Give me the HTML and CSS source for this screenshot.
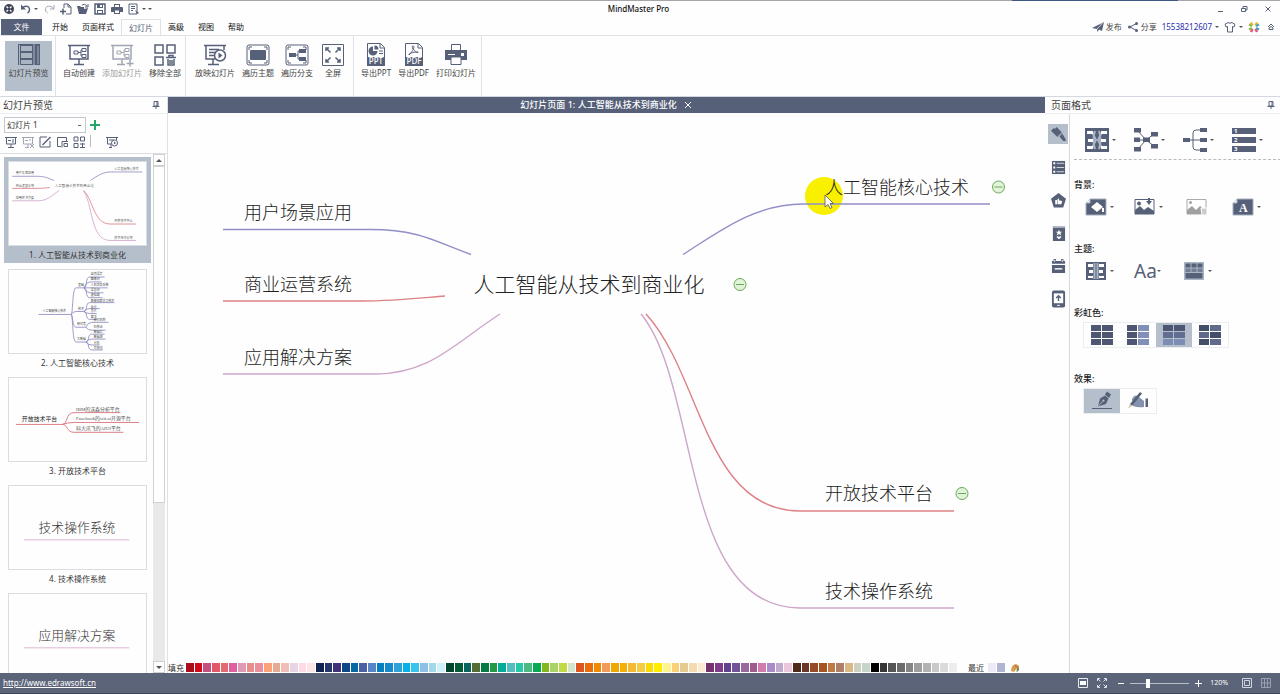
FILE: index.html
```
<!DOCTYPE html>
<html lang="zh-CN">
<head>
<meta charset="utf-8">
<title>MindMaster Pro</title>
<link rel="stylesheet" href="styles.css">
</head>
<body>
<div class="app">
<header class="titlebar">
  <div class="quick">
    <svg class="ic" viewBox="0 0 14 14"><circle cx="7" cy="7" r="5" fill="#3d4456"/><path d="M4.5 4.5l5 5M9.5 4.5l-5 5" stroke="#fff" stroke-width="1.4"/><circle cx="7" cy="7" r="1.6" fill="#3d4456"/></svg>
    <button class="qb" aria-label="撤销"><svg class="ic" viewBox="0 0 14 14"><path d="M3 7C5 3 11 3.500 10.500 8c0 1.500-1 2.500-2 3" class="s2"/><path d="M2 2.500v5h5z" class="f"/></svg></button>
    <i class="caret"></i>
    <button class="qb faded" aria-label="重做"><svg class="ic" viewBox="0 0 14 14"><path d="M12 3v4H8M11.500 6.500C9 3 3 3.500 3.500 8c0 1.500 1 2.500 2 3" class="s1"/></svg></button>
    <button class="qb" aria-label="新建"><svg class="ic" viewBox="0 0 14 14"><path d="M5 6V2h4l3 3v7H7M9 2v3h3" class="s1"/><path d="M1 9.500h6M4 6.500v6" class="s2"/></svg></button>
    <button class="qb" aria-label="打开"><svg class="ic" viewBox="0 0 14 14"><path d="M1 4h3l1 1h3v2l4-1-2 6H3z" class="f"/><path d="M6 3q3-2 5 1M12 2v3H9" class="s1"/></svg></button>
    <button class="qb" aria-label="保存"><svg class="ic" viewBox="0 0 14 14"><path d="M2 2h10v10H2z" class="s2"/><path d="M4 2h6v4H4zM4 8h6v4H4z" class="f"/><path d="M5 9h4v2H5zM7 3h2v2H7z" fill="#fff"/></svg></button>
    <button class="qb" aria-label="打印"><svg class="ic" viewBox="0 0 14 14"><path d="M4 2h6v3h2q1 0 1 1v4h-3v2H4v-2H1V6q0-1 1-1h2z" class="f"/><path d="M5 3h4v2H5zM5 8.500h4v2.500H5z" fill="#fff"/></svg></button>
    <button class="qb" aria-label="预览"><svg class="ic" viewBox="0 0 14 14"><path d="M2 2h8v10H2zM4 4.500h4M4 6.500h4M4 8.500h2" class="s1"/><path d="M8 8l4 3-2 1z" class="f"/></svg></button>
    <i class="caret"></i><i class="caret lined"></i>
  </div>
  <h1 class="apptitle">MindMaster Pro</h1>
  <div class="winctl">
    <button class="qb" aria-label="最小化"><svg class="ic" viewBox="0 0 14 14"><path d="M5 9.500h5" class="s1"/></svg></button>
    <button class="qb" aria-label="还原"><svg class="ic" viewBox="0 0 14 14"><path d="M4.500 6.500h4v3h-4zM6 6V4.500h4V8H9" class="s1"/></svg></button>
    <button class="qb" aria-label="关闭"><svg class="ic" viewBox="0 0 14 14"><path d="M4.500 4.500l5 5M9.500 4.500l-5 5" class="s1"/></svg></button>
  </div>
</header>
<nav class="tabs">
  <button class="tab file">文件</button>
  <button class="tab">开始</button>
  <button class="tab">页面样式</button>
  <button class="tab active">幻灯片</button>
  <button class="tab">高级</button>
  <button class="tab">视图</button>
  <button class="tab">帮助</button>
  <div class="user">
    <button class="ub"><svg class="ic12" viewBox="0 0 12 12"><path d="M0 7L12 1 10 10 7 8.500 5.500 11 5 8z" class="f"/><path d="M5 8l6-6.500" stroke="#fff" stroke-width=".7"/></svg>发布</button>
    <button class="ub"><svg class="ic12" viewBox="0 0 12 12"><path d="M9.500 2.500L3 6l6.500 3.500" class="s1"/><circle cx="9.500" cy="2.500" r="1.500" class="f"/><circle cx="2.500" cy="6" r="1.500" class="f"/><circle cx="9.500" cy="9.500" r="1.500" class="f"/></svg>分享</button>
    <a class="phone" href="#account">15538212607</a><i class="caret"></i>
    <svg class="ic12 shirt" viewBox="0 0 12 12"><path d="M4 1.500q2 1.500 4 0l3 2-1 2.500-1.500-.5V11h-5V5.500L2 6 1 3.500z" class="s1"/></svg><i class="caret"></i>
    <svg class="ic12 flower" viewBox="0 0 12 12"><g stroke-width="2.400"><path d="M4.500 4.500L3 1.500M7.500 4.500L9 1.500" stroke="#f3b02c"/><path d="M8 5l3-1.500M8 7l3 1.500" stroke="#43a6c9"/><path d="M7.500 8L9 11M4.500 8L3 11" stroke="#e0527c"/><path d="M4 5L1 3.500M4 7L1 8.500" stroke="#8dbb47"/></g></svg>
    <svg class="ic12" viewBox="0 0 12 12"><path d="M3 6l3-3 3 3M4 8.500V7l2-1.500L8 7v1.500z" class="s1"/></svg>
  </div>
</nav>
<section class="ribbon">
  <div class="rgroup first">
    <button class="rb on"><svg class="big" viewBox="0 0 24 24"><path d="M1 1h22v21H1z" fill="#566078"/><path d="M4 3h11v5H4zM4 10h11v5H4zM4 17h11v4H4z" fill="#aab4c2"/><path d="M2.500 2v20M17 1v21" stroke="#aab4c2"/><path d="M21 3v18" stroke="#7c879b" stroke-width="2"/></svg>幻灯片预览</button>
  </div>
  <div class="rgroup">
    <button class="rb"><svg class="big" viewBox="0 0 24 24"><path d="M1 2.500h22M3 3v13h18V3M12 16v5M7 21.500h10" class="s2"/><path d="M7 8h4v3H7zM11 9.500h3M14 7v6M14 7h1M14 13h1M15 5.500h4v3h-4zM15 11.500h4v3h-4z" class="s1"/></svg>自动创建</button>
    <button class="rb dis"><svg class="big" viewBox="0 0 24 24"><path d="M1 2.500h22M3 3v13h18V3M12 16v5M7 21.500h8" class="s2"/><path d="M7 8h4v3H7zM11 9.500h3M14 7v6M14 7h1M14 13h1M15 5.500h4v3h-4zM15 11.500h4v3h-4z" class="s1"/><path d="M20 17v6.500M16.500 20.500h7" class="s2"/></svg>添加幻灯片</button>
    <button class="rb"><svg class="big" viewBox="0 0 24 24"><path d="M2 2h8v8H2zM14 2h8v8h-8zM2 14h8v8H2zM13 14.500h10M16 14v-1.500h4V14M15 16v6h6v-6M17 17v4M19 17v4" class="s2"/></svg>移除全部</button>
  </div>
  <div class="rgroup wide">
    <button class="rb"><svg class="big" viewBox="0 0 24 24"><path d="M1 2.500h22M3 3v13h9M21 3v4M10 16v5M5 21.500h11M6 6.500h10M6 9.500h6M6 12.500h5" class="s2"/><circle cx="17" cy="12.500" r="5.500" fill="#fff" stroke="#566078" stroke-width="1.500"/><path d="M15.500 9.500v6l4-3z" class="f"/></svg>放映幻灯片</button>
    <button class="rb"><svg class="big" viewBox="0 0 24 24"><rect x="1" y="2" width="22" height="20" rx="2" class="s1"/><path d="M3 7V4h3M18 4h3v3M3 17v3h3M18 20h3v-3" class="s1"/><rect x="4" y="7" width="16" height="10" rx="1" class="f"/></svg>遍历主题</button>
    <button class="rb"><svg class="big" viewBox="0 0 24 24"><rect x="1" y="2" width="22" height="20" rx="2" class="s1"/><path d="M3 7V4h3M18 4h3v3M3 17v3h3M18 20h3v-3M10 12h3M13 8v8M13 8h2M13 16h2" class="s1"/><path d="M4 10h7v4H4zM14 6h7v4h-7zM14 14h7v4h-7z" class="f"/></svg>遍历分支</button>
    <button class="rb"><svg class="big" viewBox="0 0 24 24"><path d="M1.500 1.500h21v21h-21z" class="s1"/><path d="M9.500 9.500L5 5M14.500 9.500L19 5M9.500 14.500L5 19M14.500 14.500L19 19M5 8V5h3M16 5h3v3M5 16v3h3M16 19h3v-3" class="s2"/></svg>全屏</button>
  </div>
  <div class="rgroup out">
    <button class="rb"><svg class="big" viewBox="0 0 24 24"><path d="M3.500 14V.5h13l4 4V14M16 1v4h4" class="s1"/><path d="M3 14h18v9H3z" class="f"/><path d="M9 3.500A4.500 4.500 0 1 0 13.500 8H9z" class="f"/><path d="M10.500 2.500A4 4 0 0 1 14.500 6.500h-4z" class="f"/><path d="M15 8h4M15 10.500h4" class="s1"/><text x="12" y="21" class="doc">PPT</text></svg>导出PPT</button>
    <button class="rb"><svg class="big" viewBox="0 0 24 24"><path d="M3.500 14V.5h13l4 4V14M16 1v4h4" class="s1"/><path d="M3 14h18v9H3z" class="f"/><path d="M11 3c2 0 1 4-4 9-1-1 3-3 9-3 1 1-2 1-5-3-1-2-1-3 0-3z" class="s1"/><text x="12" y="21" class="doc">PDF</text></svg>导出PDF</button>
    <button class="rb"><svg class="big" viewBox="0 0 24 24"><path d="M7.500 8V1.500h9V8" class="s1"/><path d="M1 7h22v10H1z" class="f"/><path d="M7 14h10v7.500H7z" fill="#fff" stroke="#566078"/><path d="M4 11.500h7" stroke="#fff"/><path d="M17 10h3v3h-3z" fill="#fff"/></svg>打印幻灯片</button>
  </div>
</section>
<main class="work">
  <aside class="slides">
    <h2 class="ptitle">幻灯片预览<svg class="pin" viewBox="0 0 10 10"><path d="M3 1.500h4V6H3zM1.500 6.500h7M5 6.500V9M6 2v4" class="s1"/></svg></h2>
    <div class="pick">
      <select class="sel" aria-label="幻灯片选择"><option>幻灯片 1</option></select>
      <button class="plus" aria-label="新增"><svg viewBox="0 0 12 12" class="ic12"><path d="M6 1v10M1 6h10" stroke="#27a567" stroke-width="2"/></svg></button>
    </div>
    <div class="tools">
      <button class="tb" aria-label="自动创建"><svg class="ic" viewBox="0 0 14 14"><path d="M1 2.500h12M2.500 3v6h9V3M7 9v3M4 12.500h6M4 5.500h3M8 5h2M8 7h2" class="s1"/></svg></button>
      <button class="tb faded" aria-label="删除"><svg class="ic" viewBox="0 0 14 14"><path d="M1 2.500h12M2.500 3v6h9V3M7 9v3M4 12.500h4M4 5.500h3M8 5h2M9 9l4 4M13 9l-4 4" class="s1"/></svg></button>
      <button class="tb" aria-label="编辑"><svg class="ic" viewBox="0 0 14 14"><path d="M9 2H2v10h10V6" class="s1"/><path d="M12.500 2L6 8.500 4.500 10" class="s2"/></svg></button>
      <button class="tb" aria-label="添加主题"><svg class="ic" viewBox="0 0 14 14"><path d="M6 11.500H2.500v-9h9V6M7 12.500v-6h6M9 8.500h3.500v3H9z" class="s1"/></svg></button>
      <button class="tb" aria-label="网格"><svg class="ic" viewBox="0 0 14 14"><path d="M2 2h4v4H2zM8.500 2h4v4h-4zM2 8.500h4v4H2zM8 9h5M8 12.500h5M10.500 8v5" class="s1"/></svg></button>
      <i class="tsep"></i>
      <button class="tb" aria-label="放映"><svg class="ic" viewBox="0 0 14 14"><path d="M1 2.500h12M2.500 3v6H6M11.500 3v2M6 9v4M4 12.500h3M4 5h5" class="s1"/><circle cx="9.500" cy="8" r="3" fill="#fff" stroke="#566078"/><path d="M9 6.500v3l2-1.500z" class="f"/></svg></button>
    </div>
    <div class="listwrap">
      <ol class="list">
        <li class="item cur"><svg class="thumb map" viewBox="204 146 808 488"><use href="#mindmap"/></svg><span>1. 人工智能从技术到商业化</span></li>
        <li class="item"><svg class="thumb tree" viewBox="0 0 139 84">
          <g fill="none" stroke="#8583bd" stroke-width=".8"><path d="M30 45H63C65 45 64 18 68 18H76C80 18 77 7 82 7H97M76 18Q78 12 82 12H94M76 18H100M76 18Q78 23 82 23H96M76 18C80 18 77 28 82 28H95M63 45Q65 42 68 42H76C80 42 77 33 82 33H107M76 42Q78 39 82 39H92M76 42Q78 44 82 44H89M76 42C80 42 77 50 82 50H89M63 45C65 45 64 58 68 58H78Q80 53 84 53H101M78 58Q80 61 84 61H98M63 45C65 45 64 73 68 73H78C82 73 79 65 84 65H97M78 73Q80 70 84 70H98M78 73Q80 76 84 76H92M78 73C82 73 79 81 84 81H95"/></g>
          <g class="micro"><text x="34" y="43">人工智能核心技术</text><text x="70" y="16">基础</text><text x="70" y="40">技术</text><text x="69" y="56">研究者</text><text x="69" y="71">大数据</text><text x="83" y="5">自然语言</text><text x="83" y="10">图像识</text><text x="83" y="16">人机交互系统</text><text x="83" y="21">语音识</text><text x="83" y="26">虚拟现</text><text x="83" y="32">智能机器学习技术</text><text x="83" y="38">云计</text><text x="83" y="43">芯片</text><text x="83" y="49">算法</text><text x="86" y="52">研究机构</text><text x="86" y="59">科技企</text><text x="86" y="64">数据汇</text><text x="86" y="69">数据挖</text><text x="86" y="75">分析</text><text x="86" y="80">可视化</text></g></svg><span>2. 人工智能核心技术</span></li>
        <li class="item"><svg class="thumb" viewBox="0 0 139 84"><path d="M7 47H54C60 47 57 35 66 35H113M54 47Q60 45 66 45H132M54 47C60 47 58 55 66 55H116" fill="none" stroke="#dd7f86"/><text x="13" y="44" font-size="6" fill="#222">开放技术平台</text><g class="mono"><text x="68" y="33">IBM的沃森分析平台</text><text x="68" y="43">Facebook的wit.ai开源平台</text><text x="68" y="53">科大讯飞的AIUI平台</text></g></svg><span>3. 开放技术平台</span></li>
        <li class="item"><svg class="thumb" viewBox="0 0 139 84"><text x="30" y="47" class="tt">技术操作系统</text><path d="M15 54.500H122" stroke="#d9b5d3"/></svg><span>4. 技术操作系统</span></li>
        <li class="item"><svg class="thumb" viewBox="0 0 139 84"><text x="30" y="47" class="tt">应用解决方案</text><path d="M15 54.500H122" stroke="#d9b5d3"/></svg></li>
      </ol>
      <div class="sbar"><button class="sbtn" aria-label="向上"><i class="tri up"></i></button><div class="sthumb"></div><div class="strack"></div><button class="sbtn" aria-label="向下"><i class="tri"></i></button></div>
    </div>
  </aside>
  <section class="stage">
    <div class="dochead">幻灯片页面 1: 人工智能从技术到商业化<button class="close" aria-label="关闭页面"><svg viewBox="0 0 10 10" class="pin"><path d="M2 2l6 6M8 2L2 8" stroke="#fff"/></svg></button></div>
    <svg class="canvas" viewBox="168 113 877 549">
      <circle cx="824" cy="196" r="19" fill="#f8f000"/>
      <g id="mindmap">
        <g fill="none">
          <path d="M223 229.500H371C420 229.500 438 243 471 254.500M683 254.500C720 231 755 204 803 204H990" stroke="#918fc6"/>
          <path d="M223 301H362C395 301 420 298 445 296M646 314C702 375 705 511 800 511H954" stroke="#de8184"/>
          <path d="M223 374H375C430 374 455 343 500 314M641 314C700 385 680 608 800 608H954" stroke="#cda6cb"/>
        </g>
        <g class="topics">
          <text x="244" y="219">用户场景应用</text>
          <text x="244" y="291">商业运营系统</text>
          <text x="244" y="364">应用解决方案</text>
          <text x="589" y="292" class="root">人工智能从技术到商业化</text>
          <text x="825" y="194">人工智能核心技术</text>
          <text x="825" y="500">开放技术平台</text>
          <text x="825" y="598">技术操作系统</text>
        </g>
      </g>
      <g fill="#e2f3d9" stroke="#69a95b" stroke-width="1"><circle cx="740" cy="284.500" r="6"/><circle cx="998.500" cy="187" r="6"/><circle cx="962" cy="493.500" r="6"/><path d="M736 284.500h8M994.500 187h8M958 493.500h8"/></g>
      <path d="M825 195v12l3-2.500 2 4 2-1-2-4h3.500z" fill="#fff" stroke="#555" stroke-width=".8"/>
    </svg>
    <div class="palette"><span class="plab">填充</span>
      <div class="sw">
<i style="background:#ab0d1b"></i><i style="background:#d3091d"></i><i style="background:#c3507d"></i><i style="background:#e25867"></i><i style="background:#e26a70"></i><i style="background:#e05f9f"></i><i style="background:#df9ab8"></i><i style="background:#e88d8b"></i><i style="background:#ea8f9b"></i><i style="background:#fba278"></i><i style="background:#e5ab91"></i><i style="background:#f2bdb8"></i><i style="background:#e6d5e2"></i><i style="background:#ffdae4"></i><i style="background:#fce4e7"></i>
<i style="background:#10244f"></i><i style="background:#25376c"></i><i style="background:#40337a"></i><i style="background:#0e4786"></i><i style="background:#07699f"></i><i style="background:#4960a5"></i><i style="background:#5885c3"></i><i style="background:#087fbf"></i><i style="background:#168bcc"></i><i style="background:#2fa1d8"></i><i style="background:#06b1e7"></i><i style="background:#36c5ec"></i><i style="background:#8fbfe5"></i><i style="background:#a2d8ea"></i><i style="background:#d1eff8"></i>
<i style="background:#04432c"></i><i style="background:#055a37"></i><i style="background:#07665c"></i><i style="background:#566c35"></i><i style="background:#047b43"></i><i style="background:#249842"></i><i style="background:#05aa99"></i><i style="background:#52bebd"></i><i style="background:#24c9a9"></i><i style="background:#4dba83"></i><i style="background:#07a952"></i><i style="background:#82b81b"></i><i style="background:#a9d267"></i><i style="background:#c0d945"></i><i style="background:#d3e6c9"></i>
<i style="background:#df5522"></i><i style="background:#e96d0a"></i><i style="background:#f08a05"></i><i style="background:#f09b59"></i><i style="background:#efa800"></i><i style="background:#f8ae08"></i><i style="background:#f4b936"></i><i style="background:#f5cb41"></i><i style="background:#fadb00"></i><i style="background:#ffed00"></i><i style="background:#fff58a"></i><i style="background:#fad074"></i><i style="background:#e5cb91"></i><i style="background:#f6dbb0"></i><i style="background:#fcead2"></i>
<i style="background:#75336e"></i><i style="background:#803c89"></i><i style="background:#63418e"></i><i style="background:#735397"></i><i style="background:#966a9d"></i><i style="background:#a05b8d"></i><i style="background:#d17ab0"></i><i style="background:#a88ac8"></i><i style="background:#c3a9cf"></i><i style="background:#ecc7dc"></i>
<i style="background:#4e2a1b"></i><i style="background:#6c3728"></i><i style="background:#944b27"></i><i style="background:#a65420"></i><i style="background:#bc7b43"></i><i style="background:#ae806a"></i><i style="background:#d9b886"></i><i style="background:#cdd1c1"></i><i style="background:#c5d5cb"></i>
<i style="background:#000"></i><i style="background:#363636"></i><i style="background:#555"></i><i style="background:#6b6b6b"></i><i style="background:#858585"></i><i style="background:#9e9e9e"></i><i style="background:#b2b2b2"></i><i style="background:#c9c9c9"></i><i style="background:#dbdbdb"></i><i style="background:#ededed"></i>
      </div>
      <span class="plab recent">最近</span><div class="sw rec"><i style="background:#eeeaf5"></i><i style="background:#b0b5d3"></i></div>
      <svg class="pin" viewBox="0 0 10 10"><path d="M1 8Q1 2 6 1l3 2v4L6 9l1-4-3 4z" fill="#d6a04b"/><path d="M4 2l4 1-2 2z" fill="#d5665b"/><path d="M7 5l2-1v3L7 9z" fill="#6a8c74"/></svg>
    </div>
  </section>
  <aside class="format">
    <h2 class="ptitle">页面格式<svg class="pin" viewBox="0 0 10 10"><path d="M3 1.500h4V6H3zM1.500 6.500h7M5 6.500V9M6 2v4" class="s1"/></svg></h2>
    <div class="fbody">
      <div class="vtabs">
        <button class="vt on" aria-label="样式"><svg class="ic16" viewBox="0 0 16 16"><path d="M0 4l3-3 1 1 2-2 6 6-5 5z" class="f"/><path d="M9 10l3-3 3 5 1 3-3 0z" class="f"/><path d="M6.500 11L12 5.500" stroke="#b5bfcc" stroke-width=".8"/></svg></button>
        <button class="vt" aria-label="大纲"><svg class="ic16" viewBox="0 0 16 16"><path d="M1 1h14v14H1z" class="f"/><path d="M2.500 2.500h2v2h-2zM2.500 7h2v2h-2zM2.500 11.500h2v2h-2z" fill="#fff"/><path d="M6 3.500h8M6 8h8M6 12.500h8" stroke="#d5dae2"/></svg></button>
        <button class="vt" aria-label="图标"><svg class="ic16" viewBox="0 0 16 16"><path d="M8 0l8 6-3 9.500H3L0 6z" class="f"/><path d="M4.500 12V7.500h2V12zM7 12V6.500l1-1 1 2.500 3 .5-1 3.500z" fill="#fff"/></svg></button>
        <button class="vt" aria-label="剪贴画"><svg class="ic16" viewBox="0 0 16 16"><path d="M2 0h13v16H2z" class="f"/><path d="M2 0h13v2H2z" fill="#b2bac7"/><path d="M8.500 4l1 2h2.500L10 7.500l1 2.500-2.500-1.500L6 10l1-2.500L5 6h2.500zM8.500 14L6 12q0-2 2.500-.5Q11 10 11 12z" fill="#fff"/></svg></button>
        <button class="vt" aria-label="任务"><svg class="ic16" viewBox="0 0 16 16"><path d="M1 2h14v3H1zM1 6.500h14V15H1z" class="f"/><path d="M4 10.500h8" stroke="#fff" stroke-width="1.500"/><path d="M4 0v4M12 0v4" stroke="#566078" stroke-width="2.500"/><path d="M4 1v2M12 1v2" stroke="#fff"/></svg></button>
        <button class="vt" aria-label="附件"><svg class="ic16 tall" viewBox="0 0 16 18"><rect x="1" y="0" width="14" height="18" rx="2" class="f"/><path d="M3 3h10v10.500H3z" fill="#fff"/><path d="M8 11V6M5.500 8L8 5.500 10.500 8" class="s2"/><path d="M6.500 15.800h3" stroke="#fff"/></svg></button>
      </div>
      <div class="props">
        <div class="row lay">
          <button class="fb"><svg class="big" viewBox="0 0 24 24"><path d="M0 0h24v24H0z" class="f"/><path d="M10 3Q7 12 10 21M14 3Q17 12 14 21M7 4l4 8-4 8M17 4l-4 8 4 8" stroke="#aab4c5" fill="none" stroke-width="2"/><path d="M2 3h6v3H2zM3 11h5v3H3zM2 18h6v3H2zM16 3h6v3h-6zM16 11h5v3h-5zM16 18h6v3h-6z" fill="#fff"/></svg><i class="caret"></i></button>
          <button class="fb"><svg class="big" viewBox="0 0 24 24"><path d="M4 3l8 9 8-6M4 21l8-9 8 6M4 12h8" class="s1"/><path d="M0 0h7v4.500H0zM0 9.500h6V14H0zM0 19h7v4.500H0zM17 4h7v4.500h-7zM17 16h7v4.500h-7zM9 9.500h7V14H9z" class="f"/></svg><i class="caret"></i></button>
          <button class="fb"><svg class="big" viewBox="0 0 24 24"><path d="M3 12h18M18 2h-5q-3 0-3 3v14q0 3 3 3h5" class="s1"/><path d="M0 10h7v4H0zM17 0h7v4h-7zM17 10h7v4h-7zM17 20h7v4h-7z" class="f"/></svg><i class="caret"></i></button>
          <button class="fb"><svg class="big" viewBox="0 0 24 24"><path d="M0 0h24v6H0zM0 9h24v6H0zM0 18h24v6H0z" class="f"/><g fill="#fff" font-size="6" font-weight="700"><text x="2" y="5">1</text><text x="2" y="14">2</text><text x="2" y="23">3</text></g></svg><i class="caret"></i></button>
        </div>
        <hr class="dash">
        <h3 class="lab">背景:</h3>
        <div class="row">
          <button class="fb"><svg class="med" viewBox="0 0 22 18"><path d="M5 1h16v16H1V5z" fill="#566078" stroke="#a6afbd"/><path d="M1 5h4V1" fill="#fff" stroke="#a6afbd"/><path d="M6 9l6-5 6 5-6 5z" fill="#fff"/><path d="M18 10v4" stroke="#fff" stroke-width="2"/></svg><i class="caret"></i></button>
          <button class="fb"><svg class="med" viewBox="0 0 22 18"><path d="M1 1.500h19V16H1z" class="s1"/><path d="M1 16v-4l5-4 4 4 4-3 6 4v3z" class="f"/><circle cx="5" cy="5.500" r="2" class="f"/><path d="M14 0v3h-2l3 4 3-4h-2V0z" class="f"/></svg><i class="caret"></i></button>
          <button class="fb nudge" disabled><svg class="med" viewBox="0 0 22 18"><g opacity=".55"><path d="M1 1.500h19V16H1z" fill="none" stroke="#666"/><path d="M1 16v-4l5-4 4 4 4-4 6 5v3z" fill="#555"/><circle cx="4.500" cy="4.500" r="1.500" fill="#555"/></g><path d="M15 10h6v7h-5z" fill="#ccc" stroke="#fff"/></svg></button>
          <button class="fb"><svg class="med" viewBox="0 0 22 18"><path d="M5 1h16v16H1V5z" fill="#566078" stroke="#a6afbd"/><path d="M1 5h4V1" fill="#fff" stroke="#a6afbd"/><text x="7" y="14" fill="#fff" font-size="12" class="serif">A</text></svg><i class="caret"></i></button>
        </div>
        <h3 class="lab">主题:</h3>
        <div class="row">
          <button class="fb"><svg class="med" viewBox="0 0 20 18"><path d="M0 0h20v18H0z" class="f"/><path d="M8.500 1v16M11.500 1v16" stroke="#aab4c5" stroke-width="2"/><path d="M2 2h5v3H2zM3 8h4v3H3zM2 14h5v2H2zM13 2h5v3h-5zM13 8h4v3h-4zM13 14h5v2h-5z" fill="#fff"/></svg><i class="caret"></i></button>
          <button class="fb aa">Aa<i class="caret"></i></button>
          <button class="fb"><svg class="med" viewBox="0 0 20 18"><path d="M0 0h20v18H0z" fill="#aab6c3"/><path d="M1.500 1.500h5v4h-5zM7.500 1.500h5v4h-5zM13.500 1.500h5v4h-5zM1.500 11h17v5.500h-17z" class="f"/><path d="M1.500 6.500h5v3.500h-5zM7.500 6.500h5v3.500h-5zM13.500 6.500h5v3.500h-5z" fill="#737e94"/></svg><i class="caret"></i></button>
        </div>
        <h3 class="lab">彩虹色:</h3>
        <div class="seg">
          <button class="sg" aria-label="彩虹色一"><svg class="rain" viewBox="0 0 22 20"><path d="M0 0h10v6H0zM11 0h11v6H11zM0 7h10v6H0zM11 7h11v6H11zM0 14h10v6H0zM11 14h11v6H11z" fill="#4d5672"/></svg></button>
          <button class="sg" aria-label="彩虹色二"><svg class="rain" viewBox="0 0 22 20"><path d="M0 0h10v6H0zM0 7h10v6H0zM0 14h10v6H0z" fill="#4d5672"/><path d="M11 0h11v6H11zM11 7h11v6H11zM11 14h11v6H11z" fill="#8190b8"/></svg></button>
          <button class="sg on" aria-label="彩虹色三"><svg class="rain" viewBox="0 0 22 20"><path d="M0 0h10v6H0zM11 0h11v6H11z" fill="#4d5672"/><path d="M0 7h10v6H0zM11 7h11v6H11z" fill="#616d91"/><path d="M0 14h10v6H0zM11 14h11v6H11z" fill="#7d8cb4"/></svg></button>
          <button class="sg" aria-label="彩虹色四"><svg class="rain" viewBox="0 0 22 20"><path d="M0 0h10v6H0zM11 7h11v6H11zM0 14h10v6H0z" fill="#454e69"/><path d="M11 0h11v6H11zM0 7h10v6H0zM11 14h11v6H11z" fill="#606b8c"/></svg></button>
        </div>
        <h3 class="lab">效果:</h3>
        <div class="seg">
          <button class="sg on" aria-label="钢笔"><svg class="rain" viewBox="0 0 22 20"><path d="M7 15.500l2-8 5-3 3.500 3L15 13z" class="f"/><path d="M14 3.500l2-3 4 3-2 3.500z" class="f"/><path d="M7 15.500l5.500-6" stroke="#b9c3cf" stroke-width=".8"/><circle cx="12.500" cy="9.500" r="1" fill="#b9c3cf"/><path d="M1 17.500h20" stroke="#566078"/></svg></button>
          <button class="sg" aria-label="手绘"><svg class="rain" viewBox="0 0 22 20"><path d="M5 8Q8 2 12 6l5 4v6q-6 1-11-1z" fill="#8592ae"/><path d="M3 13L13 1l2 1.500L5 15z" class="f"/><path d="M3 13l2 2-4 2.500z" fill="#d4c6a8"/><path d="M18.500 7.500H21V16h-2.500z" class="f"/></svg></button>
        </div>
      </div>
    </div>
  </aside>
</main>
<footer class="status">
  <a class="site" href="http://www.edrawsoft.cn">http://www.edrawsoft.cn</a>
  <div class="zoom">
    <button class="qb" aria-label="适应页面"><svg class="ic" viewBox="0 0 14 14"><path d="M2.500 2.500h9v9h-9z" fill="none" stroke="#e8ebf0"/><path d="M4 5h6v4H4z" fill="#fff"/></svg></button>
    <button class="qb" aria-label="全屏"><svg class="ic" viewBox="0 0 14 14"><path d="M2.500 5V2.500H5M9 2.500h2.500V5M2.500 9v2.500H5M9 11.500h2.500V9M3 3l2.500 2.500M11 3L8.500 5.500M3 11l2.500-2.500M11 11L8.500 8.500" fill="none" stroke="#dfe3ea"/></svg></button>
    <button class="qb" aria-label="缩小"><svg class="ic" viewBox="0 0 14 14"><path d="M4 7.500h6" stroke="#fff"/></svg></button>
    <input class="range" type="range" min="10" max="400" value="120" aria-label="缩放">
    <button class="qb" aria-label="放大"><svg class="ic" viewBox="0 0 14 14"><path d="M4 7.500h7M7.500 4v7" stroke="#fff"/></svg></button>
    <span class="pct">120%</span>
    <button class="qb" aria-label="单页"><svg class="ic" viewBox="0 0 14 14"><path d="M2.500 2.500h9v9h-9zM4.500 4.500h5v5h-5z" fill="none" stroke="#cfd4de"/></svg></button>
    <button class="qb" aria-label="网格"><svg class="ic" viewBox="0 0 14 14"><path d="M2.500 2.500h9v9h-9zM2.500 7h9M5.500 2.500v9M8.500 2.500v9" fill="none" stroke="#98a1b2"/></svg></button>
  </div>
</footer>
</div>
</body>
</html>
```
FILE: styles.css
```
* { box-sizing: border-box; }
html, body { height: 100%; margin: 0; }
body { font: 8px/12px "Noto Sans", "Noto Sans CJK SC", sans-serif; color: #333; background: #fefefe; overflow: hidden; }
button { font: inherit; color: inherit; border: 0; background: none; padding: 0; display: inline-flex; align-items: center; justify-content: center; }
h1, h2, h3 { margin: 0; font-weight: 400; }
svg { flex: none; display: block; }
.f { fill: #566078; }
.s1, .s2 { fill: none; stroke: #566078; stroke-width: 1; }
.s2 { stroke-width: 1.5; }
.ic { width: 14px; height: 14px; }
.ic12 { width: 12px; height: 12px; }
.ic16 { width: 15px; height: 15px; }
.ic16.tall { height: 18px; }
.big { width: 24px; height: 24px; }
.med { width: 22px; height: 18px; }
.rain { width: 22px; height: 20px; }
.pin { width: 10px; height: 10px; }
.faded { opacity: .55; }
.caret { flex: none; width: 4px; border: 2px solid transparent; border-top-color: #555; border-bottom: 0; }
.caret.lined { border-top-color: #555; box-shadow: 0 -2px 0 -1px #555; }

.app { height: 100%; display: flex; flex-direction: column; }
.titlebar { height: 19px; flex: none; display: grid; grid-template-columns: 1fr auto 1fr; align-items: center; padding: 0 5px 2px 2px; border-top: 1px solid; border-image: linear-gradient(90deg, #a6a6a8 79%, #3f5688 79%, #3f5688 92%, #a6a6a8 92%) 1; }
.quick { display: flex; align-items: center; gap: 3px; }
.quick .caret { margin: 0 1px 0 -2px; }
.apptitle { font-size: 8px; font-weight: 500; color: #111; }
.winctl { justify-self: end; display: flex; gap: 10px; }

.tabs { height: 17px; flex: none; display: flex; border-bottom: 1px solid #dfe1e6; padding-left: 1px; }
.tab { padding: 0 7px; color: #111; }
.tab.file { background: #566078; color: #fff; width: 41px; margin-right: 3px; }
.tab.active { border: 1px solid #dfe1e6; border-bottom: 0; color: #566078; }
.user { margin-left: auto; display: flex; align-items: center; padding-right: 3px; color: #444; gap: 5px; }
.ub { gap: 2px; }
.phone { color: #2a2fae; text-decoration: none; }
.user .caret { margin-left: -2px; }

.ribbon { height: 61px; flex: none; display: flex; border-bottom: 1px solid #d3d8e0; }
.rgroup { display: flex; gap: 7px; align-items: flex-start; padding: 5px 4px 0 7px; border-right: 1px solid #e0e2e6; }
.rgroup.first { padding: 5px 3px 0 5px; }
.rgroup.wide { padding: 5px 7px 0 9px; }
.rgroup.out { padding-right: 5px; }
.rb { flex-direction: column; justify-content: flex-start; min-width: 26px; padding-top: 2px; line-height: 12px; color: #444; height: 50px; white-space: nowrap; }
.rb.on { background: #b5bfcb; width: 47px; }
.rb.dis { opacity: .55; }
.doc { font-size: 8px; font-weight: 500; fill: #fff; text-anchor: middle; }

.work { flex: 1; min-height: 0; display: flex; }
.slides { width: 168px; flex: none; display: flex; flex-direction: column; border-right: 1px solid #dfe1e5; }
.ptitle { height: 17px; flex: none; font-size: 10px; line-height: 16px; padding: 0 6px 0 3px; display: flex; justify-content: space-between; align-items: center; color: #444; border-bottom: 1px solid #eceef1; }
.pick { display: flex; align-items: center; padding: 3px 4px 0; gap: 3px; }
.sel { appearance: none; width: 82px; height: 16px; border: 1px solid #c4c7cc; border-radius: 0; font: inherit; padding: 0 2px; color: #333; background: linear-gradient(#666, #666) no-repeat right 4px center / 3px 1px #fff; }
.tools { display: flex; gap: 3px; padding: 2px 4px 0; height: 20px; align-items: flex-start; }
.tb { height: 14px; }
.tsep { width: 1px; height: 12px; background: #bbb; margin: 0 11px 0 1px; }
.listwrap { flex: 1; min-height: 0; display: flex; border-top: 1px solid #dcdee2; padding-right: 2px; }
.list { list-style: none; margin: 0; padding: 3px 2px 0 4px; flex: 1; display: flex; flex-direction: column; gap: 2px; overflow: hidden; }
.item { height: 106px; flex: none; padding: 4px 4px 0; text-align: center; display: flex; flex-direction: column; }
.item.cur { background: #b5bfcb; }
.item span { line-height: 18px; }
.thumb { width: 100%; height: 85px; background: #fefefe; border: 1px solid #dadde1; }
.map { stroke-width: 5; }
.micro { font-size: 3px; fill: #444; }
.mono { font-family: "Liberation Serif", "Noto Sans CJK SC", serif; font-size: 5px; fill: #555; }
.tt { font-size: 13px; font-weight: 300; fill: #333; }
.serif { font-family: "Liberation Serif", serif; font-weight: 700; }
.sbar { width: 12px; display: flex; flex-direction: column; background: #e9e9ea; }
.sbtn { height: 12px; border: 1px solid #cfd1d4; background: #fff; flex: none; }
.tri { border: 3px solid transparent; border-top-color: #555; border-bottom: 0; }
.tri.up { border-top: 0; border-bottom: 3px solid #555; }
.sthumb { flex: 336; background: #fff; border: 1px solid #cfd1d4; }
.strack { flex: 159; }

.stage { flex: 1; min-width: 0; display: flex; flex-direction: column; }
.dochead { height: 16px; flex: none; background: #566078; color: #fff; font-size: 9px; font-weight: 500; display: flex; align-items: center; justify-content: center; gap: 6px; }
.canvas { flex: 1; min-height: 0; width: 100%; stroke-width: 1.4; }
.topics { font-size: 18px; font-weight: 300; fill: #222; stroke: none; }
.root { font-size: 21px; text-anchor: middle; }
.palette { height: 11px; flex: none; display: flex; align-items: center; padding-right: 25px; }
.plab { width: 18px; flex: none; white-space: nowrap; }
.recent { margin-left: 10px; }
.sw { flex: 1; display: flex; height: 9px; }
.sw i { flex: 1; border-right: 1px solid #fff; }
.sw.rec { flex: none; width: 18px; margin: 0 4px 0 2px; }

.format { width: 235px; flex: none; display: flex; flex-direction: column; }
.format .ptitle { padding: 0 4px 0 6px; }
.fbody { flex: 1; display: flex; min-height: 0; }
.vtabs { width: 25px; flex: none; border-right: 1px solid #d5d8de; display: flex; flex-direction: column; gap: 13px; padding: 10px 0 0 3px; }
.vt { width: 20px; height: 20px; }
.vt.on { background: #b5bfcb; }
.props { flex: 1; padding: 13px 8px 0 4px; }
.row { display: grid; grid-template-columns: repeat(4, 49px); padding-left: 11px; height: 25px; align-items: center; }
.row.lay { height: 26px; }
.fb { justify-content: flex-start; gap: 3px; }
.fb.nudge { padding-left: 3px; }
.aa { font-size: 19px; line-height: 24px; color: #566078; gap: 0; }
.dash { border: 0; border-top: 1px dashed #bbb; margin: 6px 0 18px; }
.lab { font-size: 9px; line-height: 14px; color: #222; margin: 23px 0 2px; font-weight: 500; }
.dash + .lab { margin-top: 0; }
.seg { display: inline-flex; vertical-align: top; margin-left: 9px; border: 1px solid #ebedf0; }
.sg { width: 36px; height: 24px; }
.sg.on { background: #b5bfcb; }
.seg + .lab { margin-top: 24px; }

.status { height: 21px; flex: none; background: #5b6479; border-bottom: 1px solid #3f4558; color: #fff; display: flex; justify-content: space-between; align-items: center; padding: 0 7px 0 3px; }
.site { color: #fff; }
.zoom { display: flex; align-items: center; gap: 5px; }
.range { appearance: none; width: 59px; height: 12px; margin: 0 -3px; background: linear-gradient(#b8bfcb, #b8bfcb) no-repeat center / 100% 1px; }
.range::-webkit-slider-thumb { appearance: none; width: 4px; height: 9px; background: #fff; }
.pct { font-size: 7px; margin-right: 7px; }
```
